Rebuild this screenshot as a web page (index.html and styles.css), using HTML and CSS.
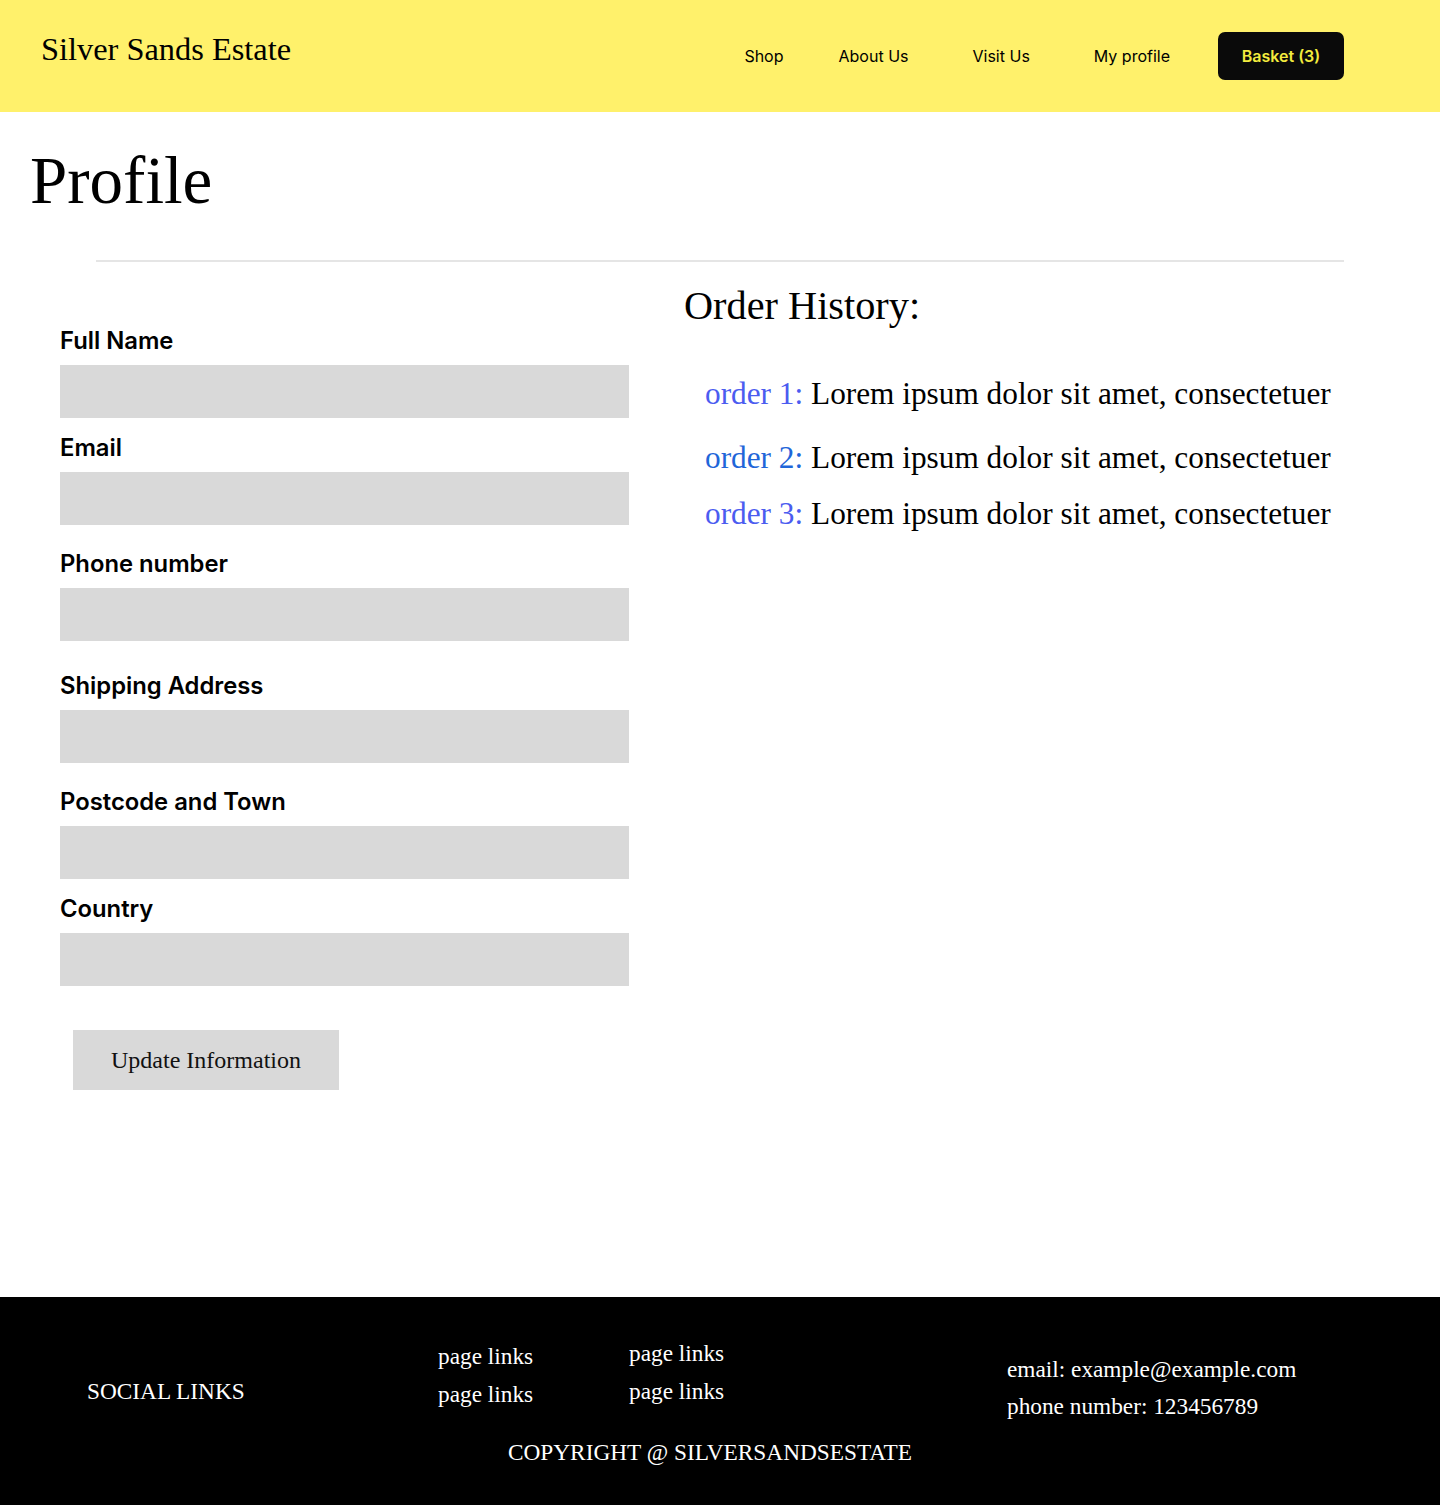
FILE: index.html
```html
<!DOCTYPE html>
<html lang="en">
<head>
<meta charset="utf-8">
<title>Profile - Silver Sands Estate</title>
<link rel="stylesheet" href="styles.css">
</head>
<body>
<header class="site-header">
  <div class="logo">Silver Sands Estate</div>
  <nav class="nav">
    <a class="nav-link nav-link-first" href="#">Shop</a>
    <a class="nav-link" href="#">About Us</a>
    <a class="nav-link" href="#">Visit Us</a>
    <a class="nav-link" href="#">My profile</a>
    <a class="basket" href="#">Basket (3)</a>
  </nav>
</header>

<main class="main">
  <h1 class="page-title">Profile</h1>
  <hr class="divider">
  <div class="columns">
    <form class="profile-form">
      <label class="field">
        <span class="field-label">Full Name</span>
        <span class="field-input"></span>
      </label>
      <label class="field field-gap-sm">
        <span class="field-label">Email</span>
        <span class="field-input"></span>
      </label>
      <label class="field field-gap-md">
        <span class="field-label">Phone number</span>
        <span class="field-input"></span>
      </label>
      <label class="field field-gap-lg">
        <span class="field-label">Shipping Address</span>
        <span class="field-input"></span>
      </label>
      <label class="field field-gap-md">
        <span class="field-label">Postcode and Town</span>
        <span class="field-input"></span>
      </label>
      <label class="field field-gap-sm">
        <span class="field-label">Country</span>
        <span class="field-input"></span>
      </label>
      <button class="update-btn" type="button">Update Information</button>
    </form>

    <section class="orders">
      <h2 class="orders-title">Order History:</h2>
      <p class="order order-1"><span class="order-id id-violet">order 1:</span> Lorem ipsum dolor sit amet, consectetuer</p>
      <p class="order order-2"><span class="order-id id-blue">order 2:</span> Lorem ipsum dolor sit amet, consectetuer</p>
      <p class="order order-3"><span class="order-id id-violet">order 3:</span> Lorem ipsum dolor sit amet, consectetuer</p>
    </section>
  </div>
</main>

<footer class="site-footer">
  <div class="footer-row">
    <div class="footer-social">SOCIAL LINKS</div>
    <div class="footer-links links-a">
      <a href="#">page links</a>
      <a href="#">page links</a>
    </div>
    <div class="footer-links links-b">
      <a href="#">page links</a>
      <a href="#">page links</a>
    </div>
    <div class="footer-contact">
      <div>email: example@example.com</div>
      <div>phone number: 123456789</div>
    </div>
  </div>
  <div class="copyright">COPYRIGHT @ SILVERSANDSESTATE</div>
</footer>
</body>
</html>
```

FILE: styles.css
```css
* { box-sizing: border-box; }

html, body { margin: 0; padding: 0; }

body {
  min-height: 100vh;
  display: flex;
  flex-direction: column;
  background: #ffffff;
  color: #000000;
  font-family: "Liberation Serif", "Times New Roman", serif;
}

a { color: inherit; text-decoration: none; }

/* Header */
.site-header {
  height: 112px;
  background: #fff16b;
  display: flex;
  align-items: center;
  justify-content: space-between;
  padding: 0 96px 0 41px;
}

.logo {
  font-family: "Liberation Serif", "Times New Roman", serif;
  font-size: 32.4px;
  line-height: 40px;
  margin-bottom: 14px;
  color: #000;
}

.nav {
  display: flex;
  align-items: center;
  gap: 64px;
  font-family: Inter, "Noto Sans", sans-serif;
  font-size: 16px;
}

.nav-link { color: #000; line-height: 20px; }
.nav-link-first { margin-right: -9px; }

.basket {
  margin-left: -16px;
  width: 126px;
  height: 48px;
  border-radius: 7px;
  background: #0a0a0a;
  color: #f3ec3e;
  font-weight: 600;
  display: flex;
  align-items: center;
  justify-content: center;
}

/* Main */
.main {
  flex: 1;
  display: flex;
  flex-direction: column;
}

.page-title {
  margin: 34px 0 0 30px;
  font-weight: 400;
  font-size: 67px;
  line-height: 68px;
}

.divider {
  margin: 46px 96px 0 96px;
  border: 0;
  height: 2px;
  background: #e5e5e5;
}

.columns {
  display: flex;
  padding-left: 60px;
  gap: 55px;
}

/* Form */
.profile-form {
  width: 569px;
  padding-top: 66px;
  display: flex;
  flex-direction: column;
}

.field {
  display: flex;
  flex-direction: column;
}

.field-gap-sm { margin-top: 17px; }
.field-gap-md { margin-top: 26px; }
.field-gap-lg { margin-top: 32px; }

.field-label {
  font-family: Inter, "Noto Sans", sans-serif;
  font-weight: 600;
  font-size: 23.8px;
  line-height: 26px;
  margin-bottom: 11px;
}

.field-input {
  display: block;
  height: 53px;
  background: #d9d9d9;
}

.update-btn {
  align-self: flex-start;
  margin: 44px 0 0 13px;
  width: 266px;
  height: 60px;
  border: 0;
  background: #d9d9d9;
  font-family: "Liberation Serif", "Times New Roman", serif;
  font-size: 24px;
  color: #111;
  padding: 0;
  cursor: pointer;
}

/* Orders */
.orders {
  padding-top: 20px;
}

.orders-title {
  margin: 0;
  font-weight: 400;
  font-size: 40.3px;
  line-height: 48px;
}

.order {
  margin: 0;
  padding-left: 21px;
  font-size: 31.3px;
  line-height: 40px;
  white-space: nowrap;
}

.order-1 { margin-top: 44px; }
.order-2 { margin-top: 24px; }
.order-3 { margin-top: 16px; }

.id-violet { color: #4b5cf0; }
.id-blue { color: #1f66d9; }

/* Footer */
.site-footer {
  height: 208px;
  background: #000;
  color: #fff;
  padding-top: 34px;
  font-size: 23.3px;
}

.footer-row {
  display: flex;
  align-items: flex-start;
  padding-left: 87px;
}

.footer-social {
  width: 351px;
  padding-top: 45px;
  line-height: 30px;
}

.footer-links {
  display: flex;
  flex-direction: column;
  line-height: 38px;
}

.links-a { width: 191px; padding-top: 6px; }
.links-b { width: 378px; padding-top: 3px; }

.footer-contact {
  padding-top: 20px;
  line-height: 37px;
}

.copyright {
  margin-top: 12px;
  text-align: center;
  padding-right: 20px;
  line-height: 30px;
}
```
